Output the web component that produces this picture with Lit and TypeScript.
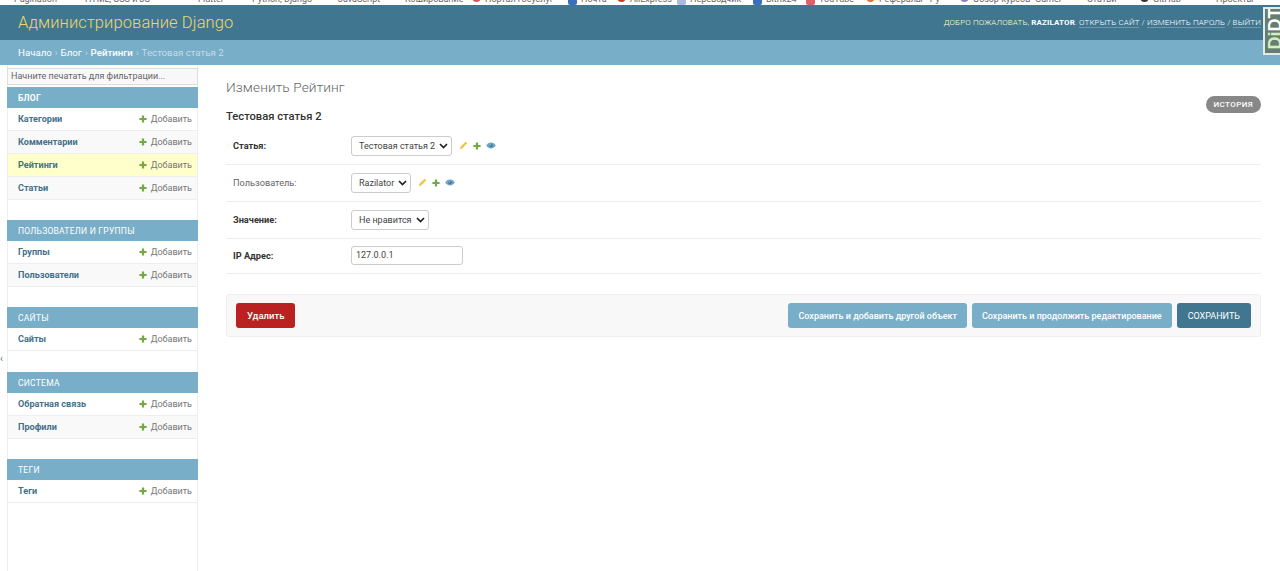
import { LitElement, html, css } from "lit";
import { customElement } from "lit/decorators.js";

const groups = [
  { title: "Блог", bold: true, items: ["Категории", "Комментарии", "Рейтинги", "Статьи"] },
  { title: "Пользователи и группы", items: ["Группы", "Пользователи"] },
  { title: "Сайты", items: ["Сайты"] },
  { title: "Система", items: ["Обратная связь", "Профили"] },
  { title: "Теги", items: ["Теги"] },
];

const bookmarks: [number, string, string?, boolean?][] = [
  [14, "Pagination"], [85, "HTML, CSS и JS"], [198, "Flutter"], [252, "Python, Django"], [338, "JavaScript"], [405, "Кэширование"],
  [472, "Портал госуслуг", "#d8535a", true], [568, "Почта", "#3a6fc0"], [617, "AliExpress", "#c8382e", true], [677, "Переводчик", "#a9bce0"], [753, "Bitrix24", "#3a6fc0"], [806, "YouTube", "#e0606a"],
  [866, "Рефералы - Ру", "#e0743a", true], [960, "Обзор курсов", "#8a80c8", true], [1035, "Gamer"], [1087, "Статьи"], [1140, "GitHub", "#333", true], [1216, "Проекты"],
];

const plus = (size = 8, fill = "#73a844") => html`<svg class="ico" width=${size} height=${size} viewBox="0 0 10 10"><path fill=${fill} d="M3.600 .5h2.800v3.100h3.100v2.800H6.400v3.100H3.600V6.400H.5V3.600h3.100z"/></svg>`;
const pencil = html`<svg class="ico" width="9" height="9" viewBox="0 0 10 10"><path fill="#e9c645" d="M7.400.8l1.800 1.800-5.700 5.700-2.600.9.800-2.700z"/></svg>`;
const eye = html`<svg class="ico" width="10" height="9" viewBox="0 0 11 10"><path fill="#6fa6c9" d="M5.500 1.800C3.200 1.800 1.300 3.200.2 5c1.100 1.800 3 3.200 5.300 3.200S9.700 6.800 10.800 5C9.700 3.200 7.800 1.800 5.500 1.800z"/><circle cx="5.500" cy="5" r="2" fill="#3a7aa0"/><circle cx="4.800" cy="4.300" r=".7" fill="#d6e8f2"/></svg>`;
const tools = html`<span class="tools">${pencil}${plus()}${eye}</span>`;

@customElement("app-root")
export class AppRoot extends LitElement {
  static styles = css`
    :host {
      display: block;
      height: 571px;
      overflow: hidden;
      position: relative;
      background: #fff;
      font-family: Roboto, "Liberation Sans", sans-serif;
      font-size: 11px;
      color: #333;
    }
    * { box-sizing: border-box; }
    .bookmarks {
      position: relative;
      height: 5px;
      overflow: hidden;
      background: #fff;
    }
    .bookmark {
      position: absolute;
      bottom: 0;
      font-size: 9px;
      line-height: 12px;
      white-space: nowrap;
      color: #666;
      display: flex;
      align-items: center;
      gap: 4px;
    }
    .favicon { width: 9px; height: 12px; border-radius: 2px; }
    .favicon.round { border-radius: 50%; height: 9px; margin-bottom: 3px; }
    .header {
      height: 35px;
      background: #417690;
      display: flex;
      align-items: center;
      justify-content: space-between;
      padding: 0 19px 1px 18px;
    }
    .brand {
      font-size: 16.500px;
      font-weight: 300;
      color: #ecd96a;
      letter-spacing: 0.1px;
    }
    .user {
      font-size: 8px;
      font-weight: 300;
      text-transform: uppercase;
      color: #ffc;
      letter-spacing: 0.13px;
      white-space: nowrap;
    }
    .user b { font-weight: 700; color: #fff; }
    .user a { color: #fff; border-bottom: 1px solid rgba(255,255,255,.25); }
    .crumbs {
      height: 25px;
      background: #79aec8;
      display: flex;
      align-items: center;
      padding: 0 18px;
      font-size: 9.700px;
      color: #c4dce8;
      gap: 3px;
    }
    .crumbs a { color: #fff; }
    .crumbs .sep { font-size: 9px; }
    .crumbs .strong { font-weight: 500; }
    .body { display: flex; align-items: stretch; height: 506px; }
    .side {
      flex: none;
      width: 191px;
      margin-left: 7px;
      padding-top: 3px;
      border-left: 1px solid #eee;
      border-right: 1px solid #eee;
    }
    .filter {
      display: block;
      width: 191px;
      height: 17px;
      margin-left: -1px;
      padding: 0 3px;
      background: #f8f8f8;
      border: 1px solid #ddd;
      font-size: 9px;
      line-height: 15px;
      color: #666;
      white-space: nowrap;
      overflow: hidden;
    }
    .group { margin-bottom: 20px; }
    .group:nth-child(4) { margin-bottom: 21px; }
    .filter + .group { margin-top: 2px; }
    .caption {
      height: 21px;
      margin-left: -1px;
      margin-right: -1px;
      background: #79aec8;
      color: #fff;
      font-size: 8.500px;
      font-weight: 400;
      letter-spacing: 0.25px;
      text-transform: uppercase;
      display: flex;
      align-items: center;
      padding-left: 11px;
    }
    .caption.bold { font-weight: 700; }
    .row {
      height: 23px;
      display: flex;
      align-items: center;
      justify-content: space-between;
      padding: 0 5px 0 10px;
      border-bottom: 1px solid #eee;
      background: #fff;
    }
    .row:nth-child(odd) { background: #f9f9f9; }
    .row.active { background: #ffc; }
    .row .name { font-size: 9.100px; font-weight: 700; color: #44708a; }
    .add { display: flex; align-items: center; gap: 4px; font-size: 9px; color: #777; }
    .main { flex: 1; min-width: 0; padding: 13px 19px 0 28px; position: relative; }
    h1 {
      margin: 0;
      font-size: 13.700px;
      font-weight: 300;
      line-height: 18px;
      color: #666;
      letter-spacing: 0.1px;
    }
    h2 {
      margin: 12px 0 0;
      font-size: 11.200px;
      font-weight: 500;
      line-height: 17px;
      color: #333;
    }
    .history {
      position: absolute;
      right: 19px;
      top: 31px;
      height: 17px;
      padding: 0 8px;
      border-radius: 9px;
      background: #888;
      color: #fff;
      font-size: 8px;
      font-weight: 500;
      letter-spacing: 0.4px;
      line-height: 17px;
      text-transform: uppercase;
    }
    .form { margin-top: 3px; }
    .field {
      display: flex;
      align-items: center;
      height: 37px;
      padding: 0 0 1px 7px;
      border-bottom: 1px solid #eee;
    }
    .field.short { height: 35px; }
    .field label {
      width: 118px;
      flex: none;
      font-size: 9.200px;
      font-weight: 700;
      color: #333;
    }
    .field label.plain { font-weight: 400; color: #666; }
    .select {
      height: 20px;
      display: flex;
      align-items: center;
      gap: 4px;
      padding: 0 3px 0 7px;
      border: 1px solid #ccc;
      border-radius: 3px;
      background: #fff;
      font-size: 9px;
      color: #444;
      white-space: nowrap;
    }
    .select svg { flex: none; }
    .input {
      width: 112px;
      height: 19px;
      padding: 0 4px;
      border: 1px solid #ccc;
      border-radius: 3px;
      font-size: 9px;
      line-height: 17px;
      color: #444;
    }
    .tools { display: flex; align-items: center; gap: 5px; margin-left: 7px; }
    .submit {
      margin-top: 20px;
      height: 43px;
      display: flex;
      align-items: center;
      gap: 5px;
      padding: 0 9px;
      background: #f8f8f8;
      border: 1px solid #eee;
      border-radius: 3px;
    }
    .btn {
      height: 25px;
      display: flex;
      align-items: center;
      padding: 0 10px;
      border-radius: 3px;
      font-size: 9px;
      font-weight: 500;
      color: #fff;
      background: #79aec8;
      white-space: nowrap;
    }
    .btn.del { background: #ba2121; padding: 0 11px; margin-right: auto; font-size: 9.500px; }
    .btn.save { background: #417690; padding: 0 11px; text-transform: uppercase; font-weight: 400; }
    .djdt {
      position: absolute;
      right: -5px;
      top: 7px;
      width: 22px;
      height: 48px;
      background: #667d71;
      border: 2px solid #e3ebe6;
      border-right: none;
      overflow: hidden;
      display: flex;
      align-items: center;
      justify-content: center;
    }
    .djdt span {
      transform: rotate(-90deg) translateX(3px);
      color: #fff;
      font-family: "Liberation Sans", sans-serif;
      font-size: 18px;
      font-weight: 700;
      white-space: nowrap;
    }
    .djdt span i { font-style: normal; color: #d8ecc0; }
    .handle { position: absolute; left: 0; top: 353px; font-size: 10px; color: #447e9b; line-height: 12px; }
  `;

  private chevron() {
    return html`<svg width="9" height="6" viewBox="0 0 9 6"><path d="M1 1l3.500 3.500L8 1" fill="none" stroke="#222" stroke-width="1.700"/></svg>`;
  }

  render() {
    return html`
      <div class="bookmarks">
        ${bookmarks.map(([x, t, c, round]) => html`<span class="bookmark" style="left:${x}px">${c ? html`<span class="favicon ${round ? "round" : ""}" style="background:${c}"></span>` : ""}${t}</span>`)}
      </div>
      <div class="header">
        <div class="brand">Администрирование Django</div>
        <div class="user">Добро пожаловать, <b>Razilator</b>. <a>Открыть сайт</a> / <a>Изменить пароль</a> / <a>Выйти</a></div>
      </div>
      <div class="crumbs">
        <a>Начало</a><span class="sep">›</span><a>Блог</a><span class="sep">›</span><a class="strong">Рейтинги</a><span class="sep">›</span><span>Тестовая статья 2</span>
      </div>
      <div class="body">
        <nav class="side">
          <div class="filter">Начните печатать для фильтрации...</div>
          ${groups.map((g) => html`
            <div class="group">
              <div class="caption ${g.bold ? "bold" : ""}">${g.title}</div>
              ${g.items.map((n) => html`
                <div class="row ${n === "Рейтинги" ? "active" : ""}">
                  <span class="name">${n}</span>
                  <span class="add">${plus()}Добавить</span>
                </div>`)}
            </div>`)}
        </nav>
        <main class="main">
          <h1>Изменить Рейтинг</h1>
          <h2>Тестовая статья 2</h2>
          <a class="history">История</a>
          <div class="form">
            <div class="field"><label>Статья:</label><span class="select">Тестовая статья 2 ${this.chevron()}</span>${tools}</div>
            <div class="field"><label class="plain">Пользователь:</label><span class="select">Razilator ${this.chevron()}</span>${tools}</div>
            <div class="field"><label>Значение:</label><span class="select">Не нравится ${this.chevron()}</span></div>
            <div class="field short"><label>IP Адрес:</label><span class="input">127.0.0.1</span></div>
          </div>
          <div class="submit">
            <a class="btn del">Удалить</a>
            <a class="btn">Сохранить и добавить другой объект</a>
            <a class="btn">Сохранить и продолжить редактирование</a>
            <a class="btn save">Сохранить</a>
          </div>
        </main>
      </div>
      <div class="handle">‹</div>
      <div class="djdt"><span><i>Dj</i>DT</span></div>
    `;
  }
}
